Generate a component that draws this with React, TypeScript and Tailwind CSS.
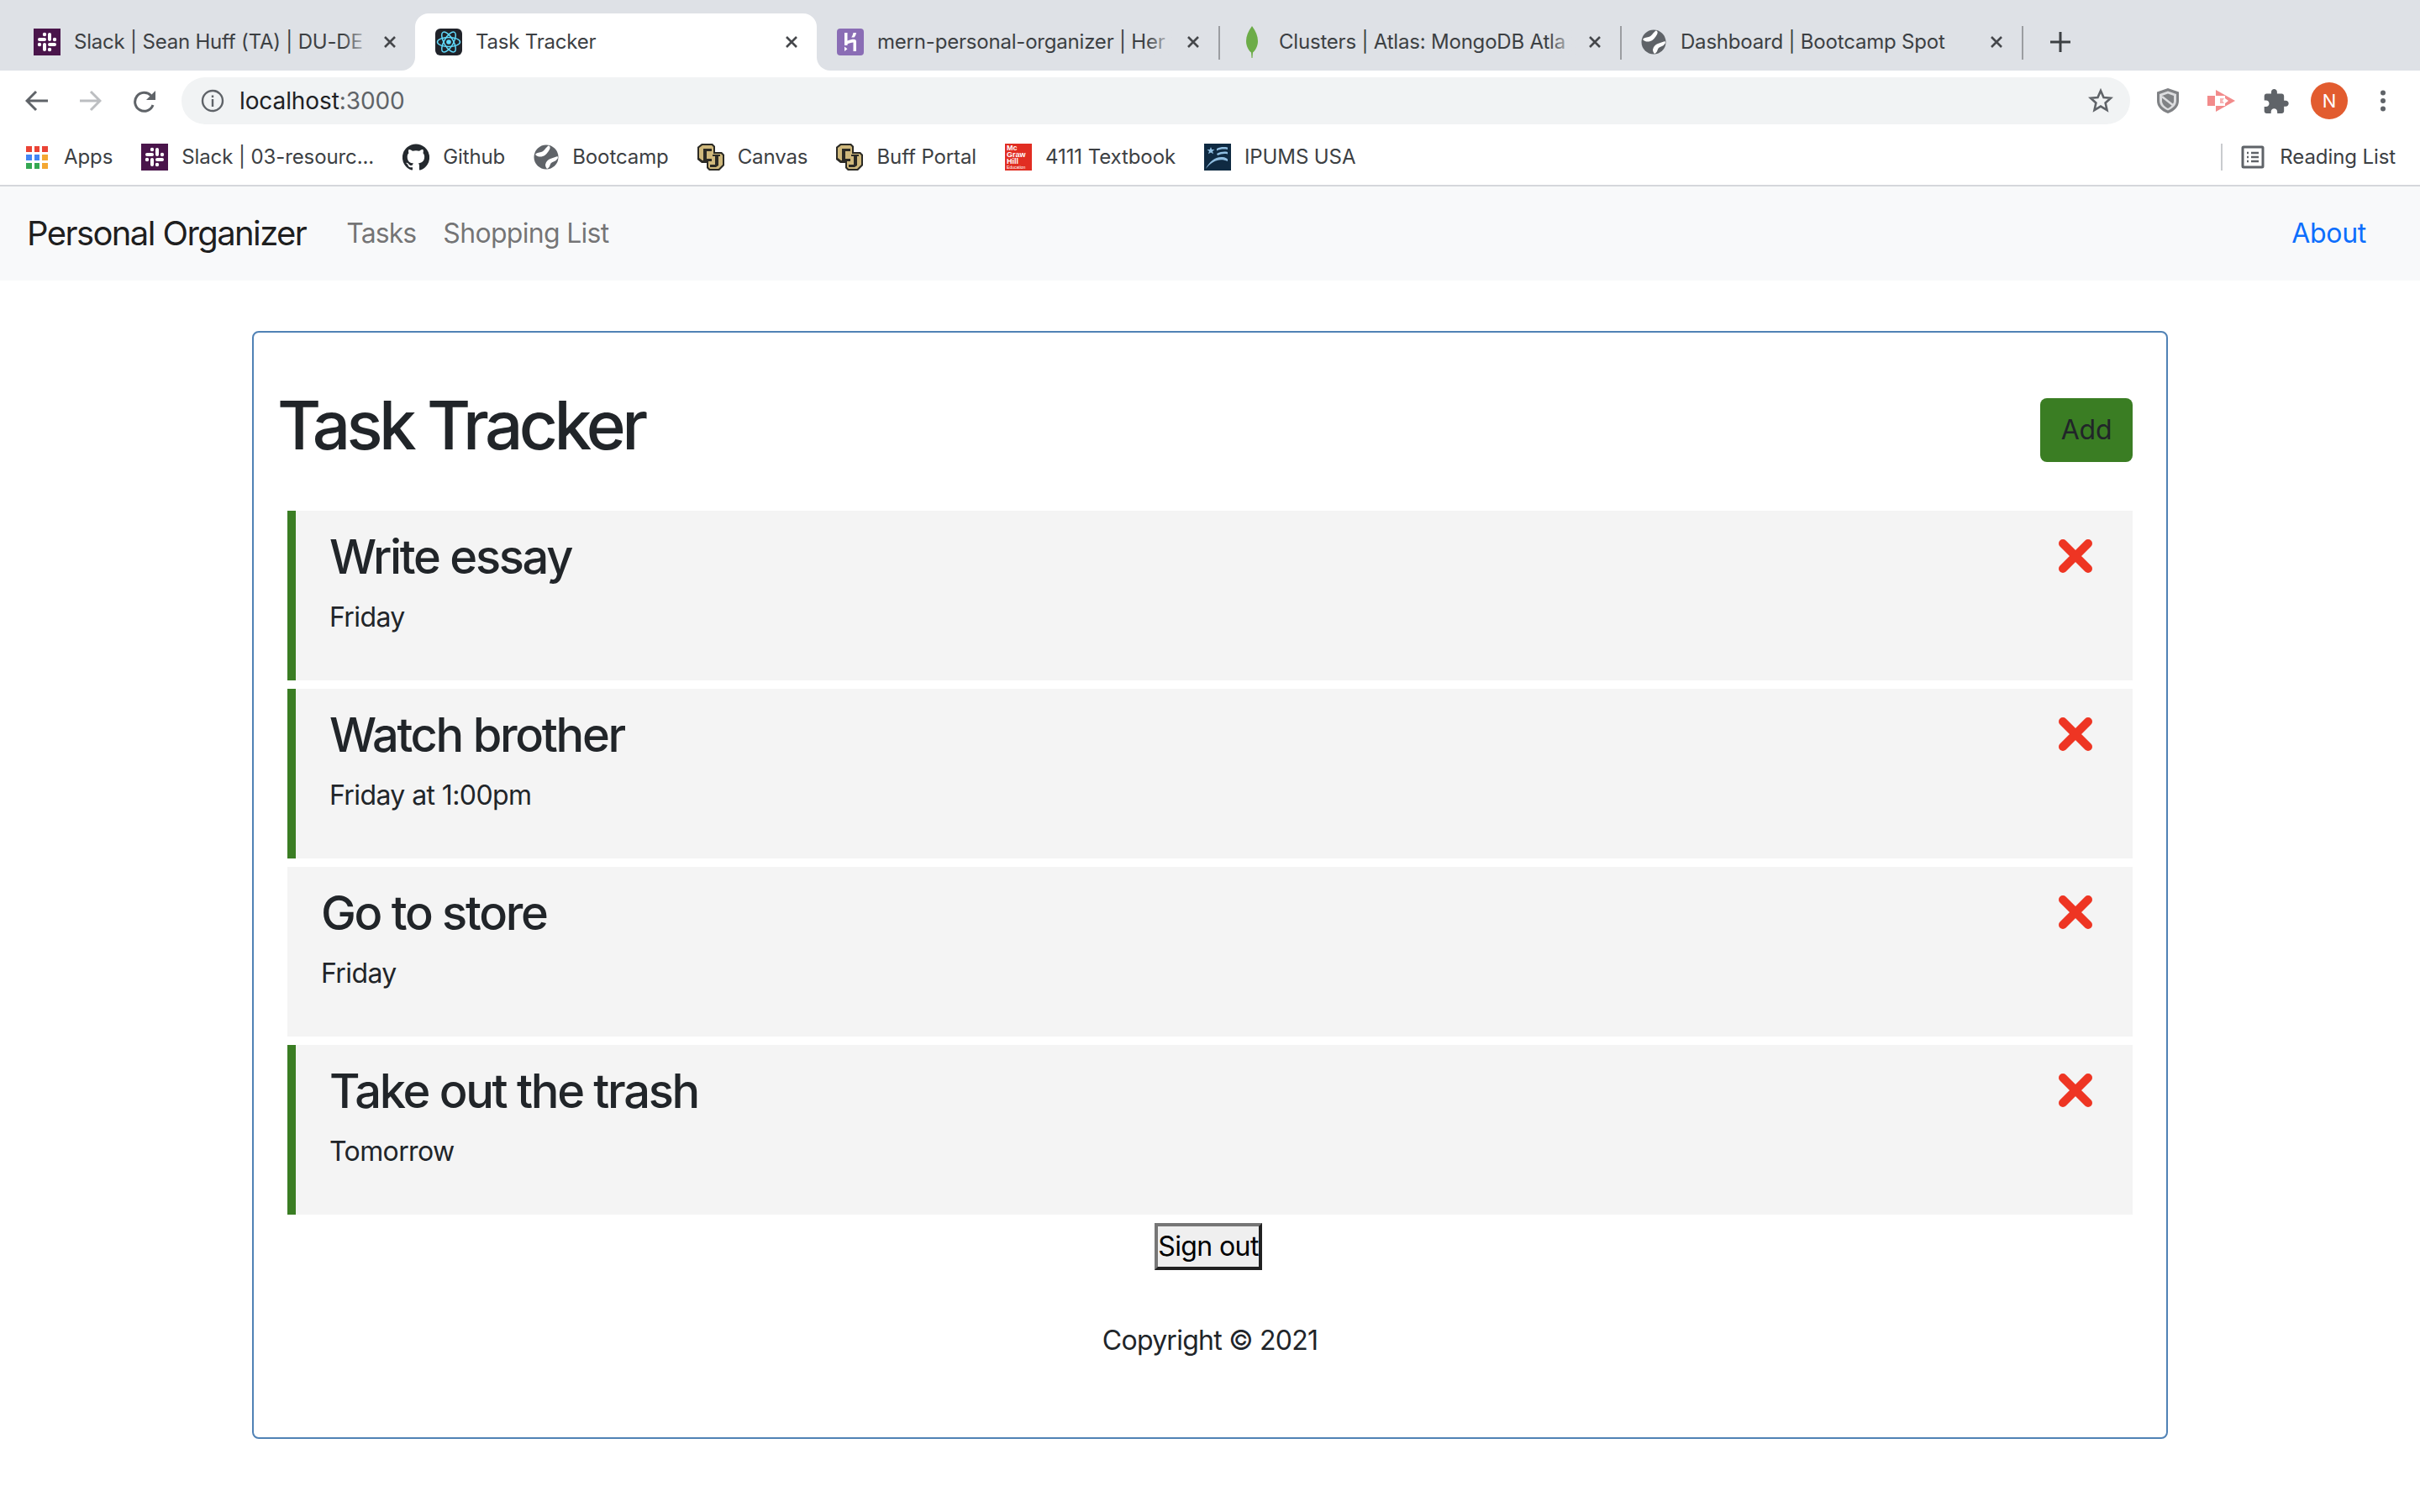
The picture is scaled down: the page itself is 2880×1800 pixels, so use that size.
import React from "react";

const FONT = "font-['Inter','Noto_Sans',sans-serif]";

function Slack() {
  return (
    <svg width="32" height="32" viewBox="0 0 32 32" className="shrink-0">
      <rect width="32" height="32" fill="#4a154b" />
      <g fill="#fff">
        <rect x="5" y="11" width="10" height="4" rx="2" />
        <circle cx="13" cy="7" r="2.200" />
        <rect x="17" y="5" width="4" height="10" rx="2" />
        <circle cx="25" cy="13" r="2.200" />
        <rect x="17" y="17" width="10" height="4" rx="2" />
        <circle cx="19" cy="25" r="2.200" />
        <rect x="11" y="17" width="4" height="10" rx="2" />
        <circle cx="7" cy="19" r="2.200" />
      </g>
    </svg>
  );
}

function ReactIcon() {
  return (
    <svg width="32" height="32" viewBox="0 0 32 32" className="shrink-0">
      <rect width="32" height="32" rx="6" fill="#20232a" />
      <g fill="none" stroke="#61dafb" strokeWidth="1.500">
        <ellipse cx="16" cy="16" rx="13.500" ry="5.500" />
        <ellipse cx="16" cy="16" rx="13.500" ry="5.500" transform="rotate(60 16 16)" />
        <ellipse cx="16" cy="16" rx="13.500" ry="5.500" transform="rotate(120 16 16)" />
      </g>
      <circle cx="16" cy="16" r="2.800" fill="#61dafb" />
    </svg>
  );
}

function Heroku() {
  return (
    <svg width="32" height="32" viewBox="0 0 32 32" className="shrink-0">
      <rect width="32" height="32" rx="4" fill="#8a6db5" />
      <path d="M9 5h3.500v9.500c3-1.200 5.500-1.800 7.500-1.800 2 0 3 1 3 2.800V27h-3.500V16.500c-2.500.2-5.500 1.200-7 1.900V20H9z" fill="#fff" />
      <path d="M19.500 5H23c-.3 2.300-1 4-2.400 5.600h-3.400c1.100-1.600 1.900-3.400 2.300-5.600zM9 21.500l3.500 2.800L9 27z" fill="#fff" />
    </svg>
  );
}

function Leaf() {
  return (
    <svg width="32" height="40" viewBox="0 0 32 40" className="shrink-0">
      <path d="M16 1c4.500 6 7 12 7 18 0 6-3 11-6 13.500L16.500 39h-1L15 32.500C12 30 9 25 9 19 9 13 11.500 7 16 1z" fill="#6cac48" />
    </svg>
  );
}

function Globe() {
  return (
    <svg width="30" height="30" viewBox="0 0 30 30" className="shrink-0">
      <circle cx="15" cy="15" r="14.500" fill="#5f6368" />
      <path d="M18 1.300C14 4 13 8 9 9c-3 .8-6 1-7 3 3 3 6 3 9 2 4-1 6-5 8-8 1-2 1-3.600-1-4.700zM28.500 14c-3 1-5.500 2-8.500 3-3 1-5 3-6 7 0 2 1 4 2 5 4-2 3-5 5-7 3-2 6-2 8-6z" fill="#fff" />
    </svg>
  );
}

function CU() {
  return (
    <svg width="32" height="32" viewBox="0 0 32 32" className="shrink-0">
      <path d="M5 0h13l3 3v7h8l3 3v13l-6 6H14l-3-3v-6H5l-5-4V4z" fill="#2b2a25" />
      <path d="M6 2h11l2 2v8h9l2 2v11l-5 5H15l-2-2v-8H6l-4-3V5z" fill="#cfb87c" />
      <path d="M7 6h10v3h-6v9h6v3H7zM18 13h9v2h-2v11l-3 2h-7v-3h6V15h-3z" fill="#2b2a25" />
    </svg>
  );
}

function McGraw() {
  return (
    <div className="w-[32px] h-[32px] shrink-0 bg-[#e12d22] flex flex-col justify-center pl-[2px] overflow-hidden text-white text-[9px] leading-[8px] font-bold font-['Liberation_Sans',sans-serif]">
      <span>Mc</span>
      <span>Graw</span>
      <span>Hill</span>
      <span className="text-[5px] leading-[7px] font-normal whitespace-nowrap">Education</span>
    </div>
  );
}

function Ipums() {
  return (
    <svg width="32" height="32" viewBox="0 0 32 32" className="shrink-0">
      <rect width="32" height="32" fill="#0f2a42" />
      <path d="M8 4l1.200 3H12.500l-2.500 2 1 3.200L8 10.400 5 12.200l1-3.200L3.500 7H6.800z" fill="#8fbde0" />
      <path d="M15 6c4-2 8-2.500 13-1.500V7c-5-1-9-.5-13 1.500zM15 12c5-2.500 9-3 13-2v2.500c-4-1-8-.3-12 1.500zM2 30c4-9 12-15 20-14 3 .3 5 1.300 6 2.500V21c-9-4-18-1-26 9z" fill="#8fbde0" />
    </svg>
  );
}

function Apps() {
  const colors = ["#ea4335", "#ea4335", "#ea4335", "#4285f4", "#4285f4", "#f4a732", "#34a853", "#34a853", "#f4a732"];
  return (
    <div className="w-[29px] shrink-0">
      <div className="grid grid-cols-3 gap-[3px] w-[26px] h-[27px]">
        {colors.map((c, i) => (
          <span key={i} className="w-[6.500px] h-[7px]" style={{ background: c }} />
        ))}
      </div>
    </div>
  );
}

function CloseX() {
  return (
    <svg width="18" height="18" viewBox="0 0 18 18" className="shrink-0 ml-[14px]">
      <path d="M3 3l12 12M15 3L3 15" stroke="#45474b" strokeWidth="2.600" />
    </svg>
  );
}

function Tab({
  icon,
  label,
  active,
  sep,
  fade,
}: {
  icon: React.ReactNode;
  label: string;
  active?: boolean;
  sep?: boolean;
  fade?: boolean;
}) {
  return (
    <div
      className={
        "relative w-[478px] h-[68px] flex items-center shrink-0 pl-[24px] pr-[21px] " +
        (active ? "bg-white rounded-t-[16px]" : "")
      }
    >
      {active ? (
        <>
          <span className="absolute -left-[16px] bottom-0 w-[16px] h-[16px] bg-white">
            <span className="block w-full h-full bg-[#dee1e6] rounded-br-[16px]" />
          </span>
          <span className="absolute -right-[16px] bottom-0 w-[16px] h-[16px] bg-white">
            <span className="block w-full h-full bg-[#dee1e6] rounded-bl-[16px]" />
          </span>
        </>
      ) : null}
      <span className="w-[32px] flex justify-center shrink-0">{icon}</span>
      <div className="relative ml-[16px] flex-1 overflow-hidden whitespace-nowrap">
        <span className="text-[24px] leading-[32px] text-[#3c4043] tracking-[-0.2px]">{label}</span>
        {fade ? (
          <span className="absolute right-0 top-0 h-full w-[32px] bg-gradient-to-r from-transparent to-[#dee1e6]" />
        ) : null}
      </div>
      <CloseX />
      {sep ? <span className="absolute -right-[2px] top-[15px] w-[2px] h-[40px] bg-[#9b9da1]" /> : null}
    </div>
  );
}

function Bookmark({ icon, label }: { icon: React.ReactNode; label: string }) {
  return (
    <div className="flex items-center gap-[16px] shrink-0">
      {icon}
      <span className="text-[24px] leading-[32px] text-[#3c4043] tracking-[-0.1px] whitespace-nowrap">{label}</span>
    </div>
  );
}

function Task({ title, day, reminder = true }: { title: string; day: string; reminder?: boolean }) {
  return (
    <div
      className={
        "h-[202px] bg-[#f4f4f4] flex justify-between items-start pl-[40px] pr-[48px] pt-[22px] " +
        (reminder ? "border-l-[10px] border-[#3a7d23]" : "")
      }
    >
      <div>
        <h3 className="text-[56px] leading-[67px] font-[550] text-[#212529] tracking-[-2.3px]">{title}</h3>
        <p className="mt-[14px] text-[32px] leading-[48px] text-[#212529] tracking-[-0.6px]">{day}</p>
      </div>
      <svg width="40" height="40" viewBox="0 0 40 40" className="mt-[12px] shrink-0">
        <path d="M5 5l30 30M35 5L5 35" stroke="#ee3523" strokeWidth="10" strokeLinecap="round" />
      </svg>
    </div>
  );
}

export default function App() {
  return (
    <div className={"w-[2880px] h-[1800px] overflow-hidden bg-white flex flex-col " + FONT}>
      {/* Tab strip */}
      <div className="h-[84px] bg-[#dee1e6] pt-[16px] pl-[16px] flex items-center shrink-0">
        <Tab icon={<Slack />} label="Slack | Sean Huff (TA) | DU-DE" fade />
        <Tab icon={<ReactIcon />} label="Task Tracker" active />
        <Tab icon={<Heroku />} label="mern-personal-organizer | Her" sep fade />
        <Tab icon={<Leaf />} label="Clusters | Atlas: MongoDB Atla" sep fade />
        <Tab icon={<Globe />} label="Dashboard | Bootcamp Spot" sep />
        <svg width="26" height="26" viewBox="0 0 26 26" className="ml-[33px]">
          <path d="M13 1v24M1 13h24" stroke="#3c4043" strokeWidth="3" />
        </svg>
      </div>

      {/* Toolbar */}
      <div className="h-[64px] bg-white flex items-center pl-[30px] pt-[8px] shrink-0">
        <svg width="27" height="26" viewBox="0 0 27 26" className="shrink-0">
          <path d="M27 13H3M13 2L2 13l11 11" fill="none" stroke="#5f6368" strokeWidth="3" />
        </svg>
        <svg width="26" height="26" viewBox="0 0 26 26" className="ml-[38px] shrink-0">
          <path d="M0 13h23M13 2l11 11-11 11" fill="none" stroke="#bcbec1" strokeWidth="3" />
        </svg>
        <svg width="27" height="27" viewBox="0 0 27 27" className="ml-[38px] shrink-0">
          <path d="M23 18a11 11 0 1 1-2.300-11.200L25 11" fill="none" stroke="#5f6368" strokeWidth="3" />
          <path d="M26 1v11H15z" fill="#5f6368" />
        </svg>
        <div className="ml-[30px] w-[2319px] h-[56px] rounded-full bg-[#f1f3f4] flex items-center pl-[23px] pr-[20px] shrink-0">
          <svg width="28" height="28" viewBox="0 0 28 28" className="shrink-0">
            <circle cx="14" cy="14" r="12" fill="none" stroke="#5f6368" strokeWidth="2.400" />
            <rect x="12.800" y="12" width="2.400" height="9" fill="#5f6368" />
            <rect x="12.800" y="7.500" width="2.400" height="2.600" fill="#5f6368" />
          </svg>
          <span className="ml-[18px] text-[28px] leading-[36px] text-[#202124] tracking-[-0.1px]">
            localhost<span className="text-[#5f6368]">:3000</span>
          </span>
          <svg width="30" height="30" viewBox="0 0 30 30" className="ml-auto shrink-0">
            <path d="M15 3l3.500 8 8.500.8-6.400 5.700 1.900 8.500-7.500-4.400L7.500 26l1.900-8.500L3 11.800l8.500-.8z" fill="none" stroke="#5f6368" strokeWidth="2.600" />
          </svg>
        </div>
        <svg width="30" height="32" viewBox="0 0 30 32" className="ml-[30px] shrink-0">
          <path d="M15 1l13 4.500V16c0 7-5 12-13 15C7 28 2 23 2 16V5.500z" fill="#808285" />
          <path d="M15 4.500L5 8v8c0 5 4 9 10 11.500C21 25 25 21 25 16V8z" fill="#dcdddf" />
          <path d="M15 7.500L8 10v6c0 4 3 7 7 9 4-2 7-5 7-9v-6z" fill="#808285" />
          <path d="M8 11l14 11" stroke="#dcdddf" strokeWidth="2.500" />
        </svg>
        <svg width="33" height="26" viewBox="0 0 33 26" className="ml-[32px] shrink-0">
          <rect x="0" y="7" width="9" height="12" fill="#f28b8b" />
          <path d="M10 0l23 13-23 13z" fill="#f28b8b" />
          <path d="M9 7h12v3l4 3-4 3v3H9z" fill="#fff" />
          <path d="M15 10h5l-2 3 2 3h-5z" fill="#f7b5b5" />
        </svg>
        <svg width="31" height="29" viewBox="1 1 22 21" className="ml-[33px] shrink-0">
          <path
            fill="#5f6368"
            d="M20.500 11H19V7c0-1.100-.9-2-2-2h-4V3.500C13 2.120 11.880 1 10.500 1S8 2.120 8 3.500V5H4c-1.100 0-1.990.9-1.990 2v3.800H3.500c1.490 0 2.700 1.210 2.700 2.700s-1.210 2.700-2.700 2.700H2V20c0 1.100.9 2 2 2h3.800v-1.500c0-1.490 1.210-2.700 2.700-2.700 1.490 0 2.700 1.210 2.700 2.700V22H17c1.100 0 2-.9 2-2v-4h1.500c1.380 0 2.500-1.120 2.500-2.500S21.880 11 20.500 11z"
          />
        </svg>
        <div className="ml-[26px] w-[44px] h-[44px] rounded-full bg-[#e25c2f] flex items-center justify-center text-white text-[22px] shrink-0">N</div>
        <svg width="8" height="26" viewBox="0 0 8 26" className="ml-[38px] shrink-0">
          <circle cx="4" cy="3.500" r="3" fill="#5f6368" />
          <circle cx="4" cy="13" r="3" fill="#5f6368" />
          <circle cx="4" cy="22.500" r="3" fill="#5f6368" />
        </svg>
      </div>

      {/* Bookmarks */}
      <div className="h-[74px] bg-white border-b-2 border-[#d5d7db] flex items-center pl-[31px] pr-[29px] pt-[6px] shrink-0">
        <div className="flex items-center gap-[34px]">
          <Bookmark icon={<Apps />} label="Apps" />
          <Bookmark icon={<Slack />} label="Slack | 03-resourc..." />
          <Bookmark
            icon={
              <svg width="32" height="32" viewBox="0 0 24 24" className="shrink-0">
                <path fill="#24292e" d="M12 .3a12 12 0 0 0-3.800 23.400c.6.100.8-.3.8-.6v-2c-3.300.7-4-1.600-4-1.600-.6-1.400-1.400-1.800-1.400-1.800-1-.7.100-.7.100-.7 1.200.1 1.800 1.200 1.800 1.200 1 1.800 2.800 1.300 3.500 1 .1-.8.400-1.300.8-1.600-2.700-.3-5.500-1.300-5.500-6 0-1.200.5-2.300 1.300-3.100-.2-.4-.6-1.600 0-3.200 0 0 1-.3 3.400 1.200a11.500 11.500 0 0 1 6 0c2.300-1.500 3.300-1.200 3.300-1.200.6 1.600.2 2.800 0 3.200.9.800 1.300 1.900 1.300 3.200 0 4.600-2.800 5.600-5.500 5.900.5.400.9 1 .9 2.200v3.300c0 .3.100.7.800.6A12 12 0 0 0 12 .3" />
              </svg>
            }
            label="Github"
          />
          <Bookmark icon={<Globe />} label="Bootcamp" />
          <Bookmark icon={<CU />} label="Canvas" />
          <Bookmark icon={<CU />} label="Buff Portal" />
          <Bookmark icon={<McGraw />} label="4111 Textbook" />
          <Bookmark icon={<Ipums />} label="IPUMS USA" />
        </div>
        <span className="ml-auto w-[2px] h-[32px] bg-[#c9cbce] shrink-0" />
        <div className="ml-[22px] flex items-center gap-[18px]">
          <svg width="28" height="28" viewBox="0 0 28 28" className="shrink-0">
            <rect x="2" y="2" width="24" height="24" rx="1" fill="none" stroke="#5f6368" strokeWidth="3" />
            <path d="M7 9h2M7 14h2M7 19h2M12 9h9M12 14h9M12 19h9" stroke="#5f6368" strokeWidth="2.400" />
          </svg>
          <span className="text-[24px] leading-[32px] text-[#3c4043] tracking-[-0.1px] whitespace-nowrap">Reading List</span>
        </div>
      </div>

      {/* Navbar */}
      <nav className="h-[112px] bg-[#f8f9fa] flex items-center pl-[32px] pr-[64px] shrink-0">
        <span className="text-[40px] leading-[60px] text-[#000000e6] tracking-[-1.6px]">Personal Organizer</span>
        <span className="ml-[48px] text-[32px] leading-[48px] text-[#0000008c] tracking-[-0.9px]">Tasks</span>
        <span className="ml-[32px] text-[32px] leading-[48px] text-[#0000008c] tracking-[-0.7px]">Shopping List</span>
        <span className="ml-auto text-[32px] leading-[48px] text-[#0d6efd] tracking-[-0.3px]">About</span>
      </nav>

      {/* Card */}
      <main className="flex-1 pt-[60px] px-[300px]">
        <div className="h-[1319px] border-2 border-[#5082b5] rounded-[8px] px-[40px] pt-[60px]">
          <header className="h-[152px] flex justify-between items-start">
            <h1 className="-ml-[12px] mt-[2px] text-[80px] leading-[96px] font-[550] text-[#212529] tracking-[-4.6px]">Task Tracker</h1>
            <button className="mt-[18px] w-[110px] h-[76px] bg-[#3a7d23] rounded-[8px] text-[32px] text-[#212529] tracking-[-0.2px]">Add</button>
          </header>
          <div className="flex flex-col gap-[10px]">
            <Task title="Write essay" day="Friday" />
            <Task title="Watch brother" day="Friday at 1:00pm" />
            <Task title="Go to store" day="Friday" reminder={false} />
            <Task title="Take out the trash" day="Tomorrow" />
          </div>
          <div className="flex justify-center mt-[10px] pr-[4px]">
            <button className="w-[128px] h-[56px] bg-[#efefef] border-[4px] border-t-[#767676] border-l-[#767676] border-r-[#212121] border-b-[#212121] text-[32px] leading-[44px] text-black tracking-[-0.6px] whitespace-nowrap flex items-center justify-center">
              Sign out
            </button>
          </div>
          <p className="mt-[60px] text-center text-[32px] leading-[48px] text-[#212529] tracking-[-0.75px]">Copyright © 2021</p>
        </div>
      </main>
    </div>
  );
}
